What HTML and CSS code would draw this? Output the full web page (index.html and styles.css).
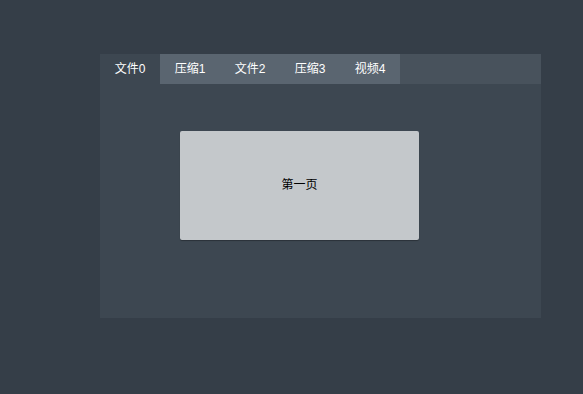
FILE: index.html
```html
<!DOCTYPE html>
<html lang="zh-CN">
<head>
    <meta charset="UTF-8">
    <meta name="viewport" content="width=device-width, initial-scale=1.0">
    <title>Tabs</title>
    <link rel="stylesheet" href="styles.css">
</head>
<body>
    <div class="panel">
        <ul class="tabs">
            <li class="tab active">文件0</li>
            <li class="tab">压缩1</li>
            <li class="tab">文件2</li>
            <li class="tab">压缩3</li>
            <li class="tab">视频4</li>
        </ul>
        <div class="page">
            <div class="card">第一页</div>
        </div>
    </div>
</body>
</html>
```

FILE: styles.css
```css
body {
    margin: 0;
    height: 100vh;
    background: #353e48;
    font-family: "Liberation Sans", "Noto Sans CJK SC", sans-serif;
    font-size: 12px;
}

.panel {
    margin: 54px 0 0 100px;
    width: 441px;
    height: 264px;
    background: #3d4751;
}

.tabs {
    display: flex;
    margin: 0;
    padding: 0;
    list-style: none;
    height: 30px;
    background: #48525c;
}

.tab {
    width: 60px;
    line-height: 30px;
    text-align: center;
    color: #fff;
    background: #5a6570;
}

.tab.active {
    background: #3d4751;
}

.page {
    padding: 47px 0 0 80px;
}

.card {
    width: 239px;
    height: 109px;
    line-height: 109px;
    text-align: center;
    color: #000;
    background: #c4c8cb;
    border-radius: 2px;
    box-shadow: 0 1px 1px rgba(0, 0, 0, 0.3);
}
```
